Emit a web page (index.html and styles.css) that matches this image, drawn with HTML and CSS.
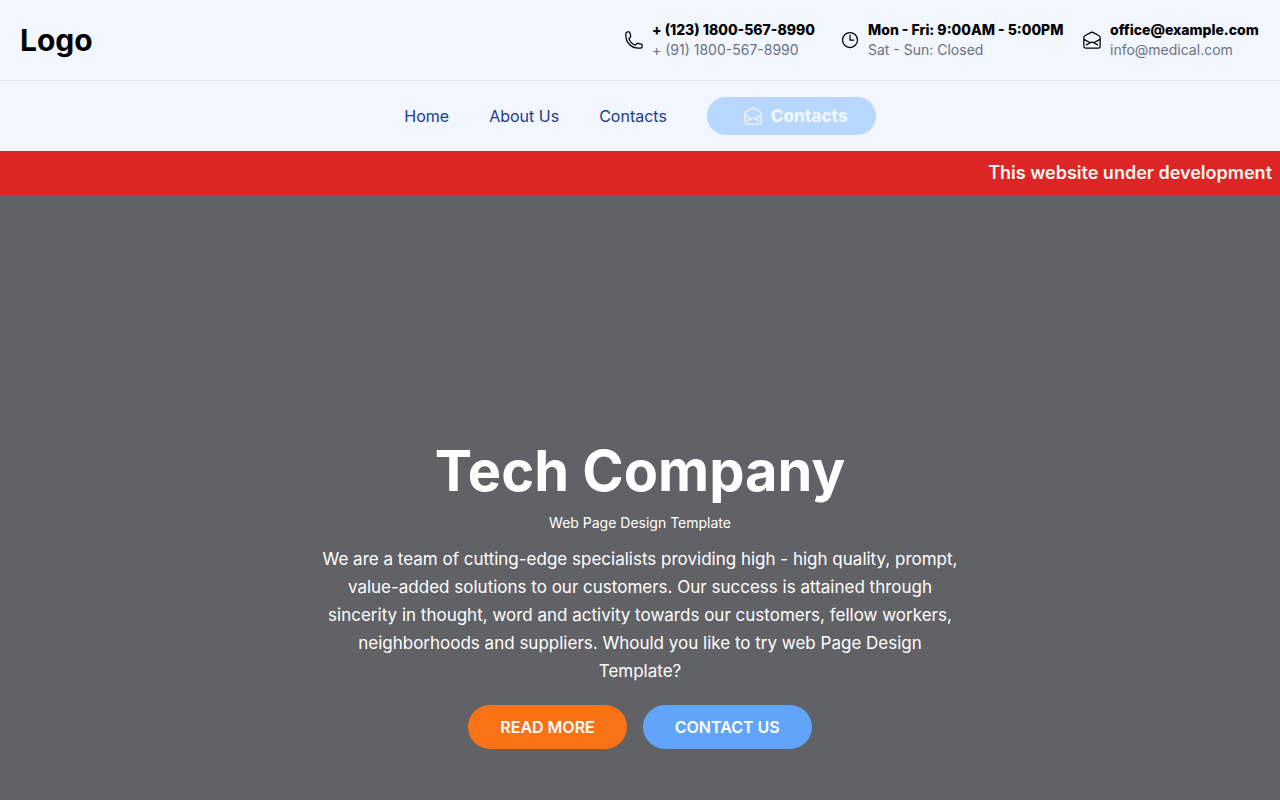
FILE: index.html
```html
<!DOCTYPE html>
<html lang="en">

<head>
  <meta charset="UTF-8">
  <meta name="viewport" content="width=device-width, initial-scale=1.0">
  <title>Tech Company</title>
  <link rel="stylesheet" href="styles.css">
</head>

<body>
  <!-- shared icons -->
  <svg class="sprite" aria-hidden="true">
    <symbol id="icon-call" viewBox="0 0 24 24">
      <path d="M2.25 6.75c0 8.284 6.716 15 15 15h2.25a2.25 2.25 0 002.25-2.25v-1.372c0-.516-.351-.966-.852-1.091l-4.423-1.106c-.44-.11-.902.055-1.173.417l-.97 1.293c-.282.376-.769.542-1.21.38a12.035 12.035 0 01-7.143-7.143c-.162-.441.004-.928.38-1.21l1.293-.97c.363-.271.527-.734.417-1.173L6.963 3.102a1.125 1.125 0 00-1.091-.852H4.5A2.25 2.25 0 002.25 4.5v2.25z" />
    </symbol>
    <symbol id="icon-time" viewBox="0 0 24 24">
      <path d="M12 6v6h4.5m4.5 0a9 9 0 11-18 0 9 9 0 0118 0z" />
    </symbol>
    <symbol id="icon-mail" viewBox="0 0 24 24">
      <path d="M21.75 9v.906a2.25 2.25 0 01-1.183 1.981l-6.478 3.488M2.25 9v.906a2.25 2.25 0 001.183 1.981l6.478 3.488m8.839 2.51l-4.66-2.51m0 0l-1.023-.55a2.25 2.25 0 00-2.134 0l-1.022.55m0 0l-4.661 2.51m16.5 1.615a2.25 2.25 0 01-2.25 2.25h-15a2.25 2.25 0 01-2.25-2.25V8.844a2.25 2.25 0 011.183-1.98l7.5-4.04a2.25 2.25 0 012.134 0l7.5 4.04a2.25 2.25 0 011.183 1.98V19.5z" />
    </symbol>
  </svg>

  <header class="header">
    <div class="topbar">
      <a href="#" class="logo">Logo</a>
      <ul class="info">
        <li class="info-item">
          <svg class="icon" aria-hidden="true"><use href="#icon-call" /></svg>
          <div>
            <p class="info-title">+ (123) 1800-567-8990</p>
            <p class="info-text">+ (91) 1800-567-8990</p>
          </div>
        </li>
        <li class="info-item">
          <svg class="icon" aria-hidden="true"><use href="#icon-time" /></svg>
          <div>
            <p class="info-title">Mon - Fri: 9:00AM - 5:00PM</p>
            <p class="info-text">Sat - Sun: Closed</p>
          </div>
        </li>
        <li class="info-item">
          <svg class="icon" aria-hidden="true"><use href="#icon-mail" /></svg>
          <div>
            <p class="info-title">office@example.com</p>
            <p class="info-text">info@medical.com</p>
          </div>
        </li>
      </ul>
    </div>
    <nav class="nav">
      <a href="#" class="nav-link">Home</a>
      <a href="#about" class="nav-link">About Us</a>
      <a href="#contacts" class="nav-link">Contacts</a>
      <button type="button" class="nav-button" disabled>
        <svg class="icon" aria-hidden="true"><use href="#icon-mail" /></svg>
        Contacts
      </button>
    </nav>
  </header>

  <div class="notice">This website under development</div>

  <main class="hero">
    <div class="hero-content">
      <h1 class="hero-title">Tech Company</h1>
      <p class="hero-subtitle">Web Page Design Template</p>
      <p class="hero-text">We are a team of cutting-edge specialists providing high - high quality, prompt, value-added solutions to our customers. Our success is attained through sincerity in thought, word and activity towards our customers, fellow workers, neighborhoods and suppliers. Whould you like to try web Page Design Template?</p>
      <div class="hero-buttons">
        <button type="button" class="button button-orange">READ MORE</button>
        <button type="button" class="button button-blue">CONTACT US</button>
      </div>
    </div>
  </main>
</body>

</html>
```
FILE: styles.css
```css
* {
  padding: 0;
  margin: 0;
  box-sizing: border-box;
}

body {
  font-family: Inter, "Liberation Sans", sans-serif;
  font-size: 16px;
  line-height: 24px;
  color: #000;
}

a {
  color: inherit;
  text-decoration: none;
}

button {
  border: none;
  font-family: inherit;
  cursor: pointer;
}

.sprite {
  display: none;
}

.icon {
  flex-shrink: 0;
  width: 20px;
  height: 20px;
  fill: none;
  stroke: currentColor;
  stroke-width: 1.5;
  stroke-linecap: round;
  stroke-linejoin: round;
}

.header {
  background-color: #f1f6ff;
}

.topbar {
  display: flex;
  justify-content: space-between;
  align-items: center;
  padding: 20px;
  border-bottom: 1px solid #e5e7eb;
}

.logo {
  font-size: 30px;
  line-height: 36px;
  font-weight: 700;
}

.info {
  display: grid;
  grid-template-columns: 200px 226px 178px;
  gap: 16px;
  list-style: none;
}

.info-item {
  display: flex;
  align-items: center;
  gap: 8px;
  font-size: 14px;
  line-height: 20px;
  white-space: nowrap;
}

.info-title {
  font-weight: 800;
}

.info-text {
  color: #6b7280;
}

.nav {
  display: flex;
  justify-content: center;
  align-items: center;
  gap: 40px;
  padding: 16px;
}

.nav-link {
  font-size: 16px;
  color: #1e3a8a;
}

.nav-button {
  display: flex;
  align-items: center;
  gap: 8px;
  height: 38px;
  padding: 0 28px 0 36px;
  border-radius: 19px;
  background-color: #b7d7ff;
  color: #f1f6ff;
  font-size: 17px;
  font-weight: 800;
  cursor: default;
}

.notice {
  padding: 8px;
  background-color: #dc2626;
  color: #fff7ed;
  font-size: 18px;
  line-height: 28px;
  font-weight: 600;
  text-align: right;
}

.hero {
  display: flex;
  justify-content: center;
  align-items: center;
  min-height: 100vh;
  padding: 20px;
  background-color: #616265;
  color: #fff;
  text-align: center;
}

.hero-content {
  max-width: 640px;
}

.hero-title {
  margin-bottom: 12px;
  font-size: 56px;
  line-height: 60px;
  font-weight: 700;
}

.hero-subtitle {
  margin-bottom: 12px;
  font-size: 14px;
  line-height: 20px;
}

.hero-text {
  font-size: 17px;
  line-height: 28px;
}

.hero-buttons {
  display: flex;
  justify-content: center;
  gap: 16px;
  margin-top: 20px;
}

.button {
  height: 44px;
  padding: 0 32px;
  border-radius: 22px;
  color: #fff;
  font-size: 16px;
  font-weight: 600;
}

.button-orange {
  background-color: #f97316;
}

.button-blue {
  background-color: #60a5fa;
}
```
